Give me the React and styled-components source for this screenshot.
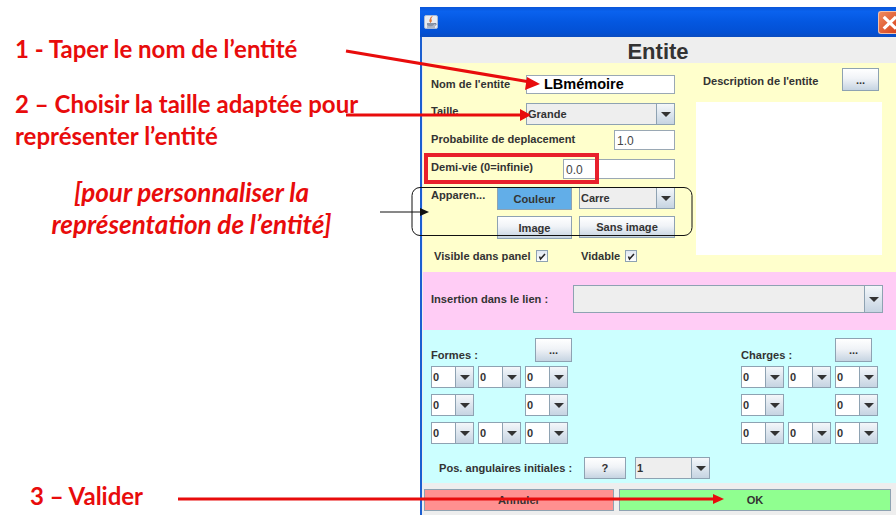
import React from "react";
import styled, { createGlobalStyle } from "styled-components";

const Global = createGlobalStyle`
  html, body {
    margin: 0;
    padding: 0;
    background: #fff;
  }
`;

const Page = styled.div`
  position: relative;
  width: 896px;
  height: 515px;
  overflow: hidden;
  display: flex;
  background: #fff;
`;

const Notes = styled.div`
  width: 420px;
  flex: none;
  padding-top: 33px;
  box-sizing: border-box;
  display: flex;
  flex-direction: column;
  font-family: "Lato", "Open Sans", sans-serif;
  font-weight: 700;
  font-size: 24px;
  line-height: 32px;
  color: #e80c0c;
`;

const Note = styled.div`
  margin-left: ${(p) => p.$left || 15}px;
  margin-top: ${(p) => p.$top || 0}px;
  white-space: nowrap;
`;

const ItalicNote = styled.div`
  width: 383px;
  margin-top: 24px;
  font-style: italic;
  font-size: 26px;
  text-align: center;
  white-space: nowrap;
`;

const Win = styled.div`
  width: 476px;
  flex: none;
  margin-top: 7px;
  border-left: 2px solid #1c5fd0;
  box-sizing: border-box;
  display: flex;
  flex-direction: column;
  background: #eeeeee;
  font-family: "Liberation Sans", Arial, sans-serif;
  font-size: 11.1px;
  font-weight: 700;
  color: #333;
`;

const TitleBar = styled.div`
  height: 30px;
  flex: none;
  margin-left: -2px;
  padding: 0 0 0 4px;
  display: flex;
  align-items: center;
  justify-content: space-between;
  background: linear-gradient(#0a56d8 0%, #0a62ee 15%, #0457e0 50%, #0350d4 85%, #0a4cc0 100%);
`;

const CloseBtn = styled.div`
  width: 18px;
  height: 23px;
  border: 1px solid #f4c0a8;
  border-right: none;
  border-radius: 3px 0 0 3px;
  box-sizing: border-box;
  background: linear-gradient(135deg, #ee8a5e, #d8431c);
  overflow: hidden;
  display: flex;
  align-items: center;
`;

const Heading = styled.div`
  height: 26px;
  flex: none;
  text-align: center;
  font-size: 22px;
  line-height: 30px;
  color: #333;
  padding-right: 2px;
`;

const Band = styled.div`
  margin-left: 1px;
  background: ${(p) => p.$bg};
  height: ${(p) => p.$h}px;
  flex: none;
  box-sizing: border-box;
`;

const YellowBand = styled(Band)`
  display: flex;
  padding: 12px 0 0 8px;
  gap: 21px;
`;

const FormCol = styled.div`
  width: 244px;
  flex: none;
  display: flex;
  flex-direction: column;
`;

const Row = styled.div`
  display: flex;
  align-items: center;
  justify-content: space-between;
  height: ${(p) => p.$h}px;
  margin-bottom: ${(p) => p.$mb || 0}px;
`;

const Label = styled.span`
  white-space: nowrap;
  margin-bottom: ${(p) => p.$lift || 0}px;
  width: ${(p) => (p.$w ? `${p.$w}px` : "auto")};
`;

const TextBox = styled.div`
  width: ${(p) => p.$w}px;
  height: 100%;
  box-sizing: border-box;
  border: 1px solid #9aa8b4;
  background: #fff;
  padding: ${(p) => (p.$strong ? "0 0 2px 2px" : "2px 0 0 2px")};
  display: flex;
  align-items: center;
  font-weight: ${(p) => (p.$strong ? 700 : 400)};
  font-size: ${(p) => (p.$strong ? 14.5 : 12)}px;
  color: ${(p) => (p.$strong ? "#000" : "#444")};
  text-indent: ${(p) => p.$indent || 0}px;
`;

const ComboBox = styled.div`
  width: ${(p) => p.$w}px;
  height: ${(p) => p.$h || 22}px;
  box-sizing: border-box;
  border: 1px solid #8ea2b2;
  background: ${(p) => p.$bg || "#eeeeee"};
  display: flex;
  flex: none;
`;

const ComboText = styled.div`
  flex: 1;
  padding-left: 1px;
  display: flex;
  align-items: center;
  font-size: 11px;
`;

const ComboArrow = styled.div`
  width: 17px;
  flex: none;
  border-left: 1px solid #8ea2b2;
  background: linear-gradient(#f4f7fa, #c6d4e2);
  display: flex;
  align-items: center;
  justify-content: center;

  &::after {
    content: "";
    border-left: 5px solid transparent;
    border-right: 5px solid transparent;
    border-top: 5px solid #333;
  }
`;

const Button = styled.div`
  width: ${(p) => p.$w}px;
  height: ${(p) => p.$h || 23}px;
  flex: none;
  box-sizing: border-box;
  border: 1px solid #8ea2b2;
  background: ${(p) => p.$bg || "linear-gradient(#ffffff, #f0f3f7 45%, #c6d4e2)"};
  display: flex;
  align-items: center;
  justify-content: center;
  color: #333;
`;

const AppearRow = styled.div`
  display: grid;
  grid-template-columns: 59px 75px 96px;
  grid-template-rows: 23px 22px;
  column-gap: 7px;
  row-gap: 6px;
  margin-bottom: 12px;
`;

const AppearLabel = styled.div`
  grid-row: 1 / 3;
  margin-top: 2px;
  white-space: nowrap;
`;

const ChecksRow = styled.div`
  display: flex;
  align-items: center;
  padding-left: 3px;
`;

const Check = styled.span`
  display: inline-flex;
  align-items: center;
  gap: 5px;
  width: ${(p) => p.$w}px;
  white-space: nowrap;
`;

const Tick = styled.span`
  width: 12px;
  height: 12px;
  box-sizing: border-box;
  border: 1px solid #8ea2b2;
  background: linear-gradient(#dfe7f0, #fff);
  display: inline-flex;
`;

const DescCol = styled.div`
  width: 186px;
  flex: none;
  display: flex;
  flex-direction: column;
  margin-top: -7px;
`;

const DescHead = styled.div`
  height: 23px;
  padding: 0 3px 0 7px;
  display: flex;
  align-items: center;
  justify-content: space-between;
  margin-bottom: 11px;
`;

const DescBox = styled.div`
  height: 153px;
  background: #fff;
`;

const PinkBand = styled(Band)`
  display: flex;
  align-items: center;
  justify-content: space-between;
  padding: 0 13px 4px 8px;
`;

const CyanBand = styled(Band)`
  padding: 8px 0 0 8px;
  display: flex;
  flex-direction: column;
`;

const Charts = styled.div`
  display: flex;
  justify-content: space-between;
  width: 457px;
`;

const ComboGroup = styled.div`
  width: 147px;
`;

const GroupHead = styled.div`
  height: 24px;
  padding-right: ${(p) => p.$pr}px;
  margin-bottom: 4px;
  display: flex;
  align-items: flex-end;
  justify-content: space-between;
`;

const ComboGrid = styled.div`
  display: grid;
  grid-template-columns: repeat(3, 43px);
  grid-auto-rows: 22px;
  column-gap: 4px;
  row-gap: 6px;
`;

const PosRow = styled.div`
  margin: 13px 0 0 8px;
  display: flex;
  align-items: center;
`;

const PosControls = styled.div`
  display: flex;
  gap: 9px;
`;

const Footer = styled.div`
  flex: none;
  padding: 6px 3px 0 2px;
  display: flex;
  gap: 5px;
`;

const FootButton = styled(Button)`
  flex: none;
  height: 22px;
`;

const Overlay = styled.svg`
  position: absolute;
  inset: 0;
  pointer-events: none;
`;

const Combo = ({ w = 43, h, value, bg }) => (
  <ComboBox $w={w} $h={h} $bg={bg}>
    <ComboText>{value}</ComboText>
    <ComboArrow />
  </ComboBox>
);

const Checked = () => (
  <Tick>
    <svg width="10" height="10" viewBox="0 0 10 10">
      <path d="M2.5 5.5 L3.5 8 L8 3" fill="none" stroke="#222" strokeWidth="1.5" />
    </svg>
  </Tick>
);

const Spacer = () => <div />;

const ZeroGrid = () => (
  <ComboGrid>
    {[0, 1, 2, 3, 4, 5, 6, 7, 8].map((i) =>
      i === 4 ? <Spacer key={i} /> : <Combo key={i} value="0" bg="#fff" />
    )}
  </ComboGrid>
);

const JavaIcon = () => (
  <svg width="14" height="14" viewBox="0 0 14 14">
    <rect x="0.5" y="0.5" width="13" height="13" rx="1.5" fill="#e8ecf2" stroke="#a8bad6" />
    <path d="M8 1.5 C5 4 9 5 6.5 7.5 C5 6 6 4 8 1.5 Z" fill="#e8823c" stroke="#d8682a" strokeWidth="0.8" />
    <path d="M3 8 H10 V10.5 Q6.5 12 3 10.5 Z" fill="#8a95a8" />
    <path d="M10 8.5 H12 V10 H10 M3 12 H11" fill="none" stroke="#6f7c92" strokeWidth="0.9" />
  </svg>
);

export default function App() {
  return (
    <Page>
      <Global />
      <Notes>
        <Note>1 - Taper le nom de l’entité</Note>
        <Note $top={23}>2 – Choisir la taille adaptée pour</Note>
        <Note>représenter l’entité</Note>
        <ItalicNote>
          [pour personnaliser la
          <br />
          représentation de l’entité]
        </ItalicNote>
        <Note $left={30} $top={240}>3 – Valider</Note>
      </Notes>
      <Win>
        <TitleBar>
          <JavaIcon />
          <CloseBtn>
            <svg width="18" height="21" viewBox="0 0 18 21">
              <path d="M5 4.5 L18 17 M18 4.5 L5 17" stroke="#fff" strokeWidth="3.4" />
            </svg>
          </CloseBtn>
        </TitleBar>
        <Heading>Entite</Heading>
        <YellowBand $bg="#ffffcc" $h={209}>
          <FormCol>
            <Row $h={19} $mb={9}>
              <Label $lift={2}>Nom de l'entite</Label>
              <TextBox $w={149} $strong $indent={15}>LBmémoire</TextBox>
            </Row>
            <Row $h={22} $mb={5}>
              <Label $lift={6}>Taille</Label>
              <Combo w={149} value="Grande" />
            </Row>
            <Row $h={20} $mb={9}>
              <Label $lift={2}>Probabilite de deplacement</Label>
              <TextBox $w={61}>1.0</TextBox>
            </Row>
            <Row $h={20} $mb={8}>
              <Label $lift={4}>Demi-vie (0=infinie)</Label>
              <TextBox $w={112}>0.0</TextBox>
            </Row>
            <AppearRow>
              <AppearLabel>Apparen...</AppearLabel>
              <Button $w={75} $bg="#62aee8">Couleur</Button>
              <Combo w={96} value="Carre" />
              <Button $w={75}>Image</Button>
              <Button $w={96} $h={22}>Sans image</Button>
            </AppearRow>
            <ChecksRow>
              <Check $w={147}>Visible dans panel <Checked /></Check>
              <Check>Vidable <Checked /></Check>
            </ChecksRow>
          </FormCol>
          <DescCol>
            <DescHead>
              <Label $lift={-3}>Description de l'entite</Label>
              <Button $w={37}>...</Button>
            </DescHead>
            <DescBox />
          </DescCol>
        </YellowBand>
        <PinkBand $bg="#ffccf5" $h={58}>
          <Label $lift={1}>Insertion dans le lien :</Label>
          <Combo w={310} h={28} />
        </PinkBand>
        <CyanBand $bg="#ccffff" $h={153}>
          <Charts>
            <ComboGroup>
              <GroupHead $pr={6}>
                <Label $lift={1}>Formes :</Label>
                <Button $w={37} $h={24}>...</Button>
              </GroupHead>
              <ZeroGrid />
            </ComboGroup>
            <ComboGroup>
              <GroupHead $pr={16}>
                <Label $lift={1}>Charges :</Label>
                <Button $w={37} $h={24}>...</Button>
              </GroupHead>
              <ZeroGrid />
            </ComboGroup>
          </Charts>
          <PosRow>
            <Label $w={145}>Pos. angulaires initiales :</Label>
            <PosControls>
              <Button $w={42} $h={22}>?</Button>
              <Combo w={75} value="1" />
            </PosControls>
          </PosRow>
        </CyanBand>
        <Footer>
          <FootButton $w={190} $bg="#ff9090">Annuler</FootButton>
          <FootButton $w={272} $bg="#90ff90">OK</FootButton>
        </Footer>
      </Win>
      <Overlay width="896" height="515" viewBox="0 0 896 515">
        <path d="M346 51 L530 82" stroke="#e80c0c" strokeWidth="3" />
        <path d="M540 84 L525 90 L527 77 Z" fill="#e80c0c" />
        <path d="M346 115 L522 115" stroke="#e80c0c" strokeWidth="3" />
        <path d="M531 115 L520 109 L520 121 Z" fill="#e80c0c" />
        <path d="M178 499 L716 499" stroke="#e80c0c" strokeWidth="3" />
        <path d="M724 499 L713 494 L713 504 Z" fill="#e80c0c" />
        <rect x="426" y="155" width="171" height="27" fill="none" stroke="#e8202c" strokeWidth="4" />
        <rect x="412" y="187.5" width="280" height="48" rx="8" fill="none" stroke="#111" strokeWidth="1" />
        <path d="M380 212 L421 212" stroke="#111" strokeWidth="1" />
        <path d="M429 212 L420 208 L420 216 Z" fill="#111" />
      </Overlay>
    </Page>
  );
}
